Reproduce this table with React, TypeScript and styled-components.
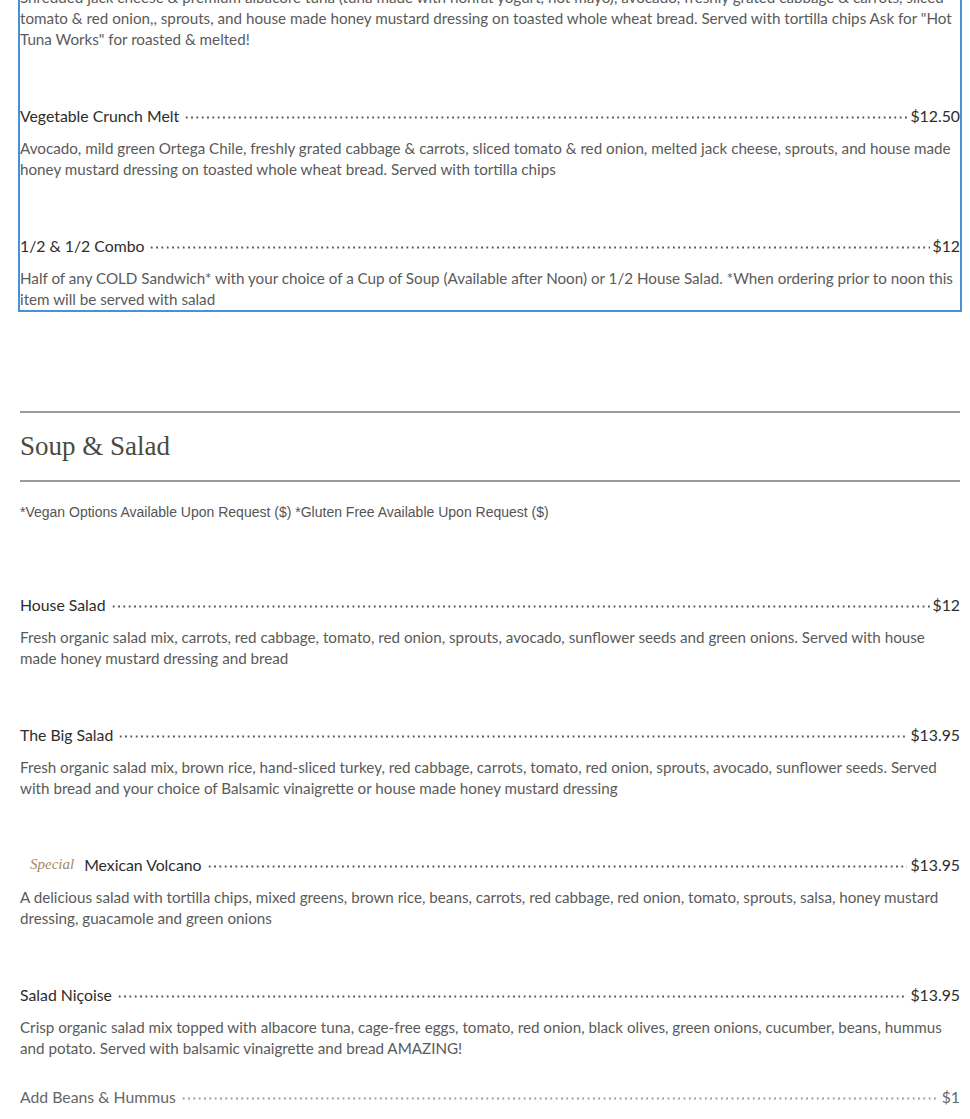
import styled, { createGlobalStyle } from 'styled-components'

const GlobalStyle = createGlobalStyle`
  body {
    margin: 0;
    background: #fff;
    font-family: Lato, "Open Sans", sans-serif;
  }
`

const Page = styled.div`
  padding: 0 10px 0 20px;
  margin-top: -13px;
`

const Selected = styled.section`
  margin: 0 -2px;
  padding: 0 2px;
  border: 2px solid #4a90d6;
  border-top: none;
  border-left-width: 2px;
  margin-left: -2px;
  padding-left: 0;
  padding-right: 0;
`

const Rule = styled.hr<{ $top: number }>`
  border: none;
  height: 2px;
  background: #9a9a9a;
  margin: ${(p) => p.$top}px 0 0;
`

const Heading = styled.h2`
  margin: 16px 0 17px;
  font-family: "Liberation Serif", serif;
  font-weight: 400;
  font-size: 27px;
  line-height: 34px;
  color: #4a4a3e;
`

const Note = styled.p`
  margin: 20px 0 70px;
  font-family: "Liberation Sans", Arial, sans-serif;
  font-size: 14px;
  line-height: 20px;
  color: #555;
`

const List = styled.div`
  display: flex;
  flex-direction: column;
  gap: 53px;
`

const Item = styled.div`
  display: flex;
  flex-direction: column;
`

const TitleRow = styled.div<{ $muted?: boolean }>`
  display: flex;
  align-items: center;
  height: 24px;
  font-size: 15.8px;
  color: ${(p) => (p.$muted ? '#666' : '#2c2c2c')};
`

const Tag = styled.span`
  font-family: "Liberation Serif", serif;
  font-style: italic;
  font-size: 15px;
  color: #a88a5a;
  margin: 0 10px 0 10px;
`

const Leader = styled.span<{ $muted?: boolean }>`
  flex: 1;
  align-self: stretch;
  margin: 0 3px 0 5px;
  background-image: radial-gradient(circle, ${(p) => (p.$muted ? '#999' : '#555')} 0.9px, transparent 1.3px);
  background-size: 5.33px 3px;
  background-repeat: repeat-x;
  background-position: 0 13px;
`

const Price = styled.span`
  white-space: nowrap;
`

const Desc = styled.p<{ $first?: boolean }>`
  margin: ${(p) => (p.$first ? 0 : 11)}px 0 0;
  font-size: 15.2px;
  line-height: 21px;
  color: #5a5a5a;
`

const AddOn = styled.div`
  margin-top: 25px;
`

type MenuItem = {
  title?: string
  price?: string
  desc: string
  tag?: string
}

const lunchTail: MenuItem[] = [
  {
    desc: 'Shredded jack cheese & premium albacore tuna (tuna made with nonfat yogurt, not mayo), avocado, freshly grated cabbage & carrots, sliced tomato & red onion,, sprouts, and house made honey mustard dressing on toasted whole wheat bread. Served with tortilla chips Ask for "Hot Tuna Works" for roasted & melted!',
  },
  {
    title: 'Vegetable Crunch Melt',
    price: '$12.50',
    desc: 'Avocado, mild green Ortega Chile, freshly grated cabbage & carrots, sliced tomato & red onion, melted jack cheese, sprouts, and house made honey mustard dressing on toasted whole wheat bread. Served with tortilla chips',
  },
  {
    title: '1/2 & 1/2 Combo',
    price: '$12',
    desc: 'Half of any COLD Sandwich* with your choice of a Cup of Soup (Available after Noon) or 1/2 House Salad. *When ordering prior to noon this item will be served with salad',
  },
]

const salads: MenuItem[] = [
  {
    title: 'House Salad',
    price: '$12',
    desc: 'Fresh organic salad mix, carrots, red cabbage, tomato, red onion, sprouts, avocado, sunflower seeds and green onions. Served with house made honey mustard dressing and bread',
  },
  {
    title: 'The Big Salad',
    price: '$13.95',
    desc: 'Fresh organic salad mix, brown rice, hand-sliced turkey, red cabbage, carrots, tomato, red onion, sprouts, avocado, sunflower seeds. Served with bread and your choice of Balsamic vinaigrette or house made honey mustard dressing',
  },
  {
    title: 'Mexican Volcano',
    tag: 'Special',
    price: '$13.95',
    desc: 'A delicious salad with tortilla chips, mixed greens, brown rice, beans, carrots, red cabbage, red onion, tomato, sprouts, salsa, honey mustard dressing, guacamole and green onions',
  },
  {
    title: 'Salad Niçoise',
    price: '$13.95',
    desc: 'Crisp organic salad mix topped with albacore tuna, cage-free eggs, tomato, red onion, black olives, green onions, cucumber, beans, hummus and potato. Served with balsamic vinaigrette and bread AMAZING!',
  },
]

function MenuEntry({ title, price, desc, tag }: MenuItem) {
  return (
    <Item>
      {title && (
        <TitleRow>
          {tag && <Tag>{tag}</Tag>}
          <span>{title}</span>
          <Leader />
          <Price>{price}</Price>
        </TitleRow>
      )}
      <Desc $first={!title}>{desc}</Desc>
    </Item>
  )
}

export default function App() {
  return (
    <>
      <GlobalStyle />
      <Page>
        <Selected>
          <List>
            {lunchTail.map((item, i) => (
              <MenuEntry key={i} {...item} />
            ))}
          </List>
        </Selected>

        <Rule $top={99} />
        <Heading>Soup &amp; Salad</Heading>
        <Rule $top={0} />
        <Note>*Vegan Options Available Upon Request ($) *Gluten Free Available Upon Request ($)</Note>

        <List>
          {salads.map((item) => (
            <MenuEntry key={item.title} {...item} />
          ))}
        </List>
        <AddOn>
          <TitleRow $muted>
            <span>Add Beans &amp; Hummus</span>
            <Leader $muted />
            <Price>$1</Price>
          </TitleRow>
        </AddOn>
      </Page>
    </>
  )
}
